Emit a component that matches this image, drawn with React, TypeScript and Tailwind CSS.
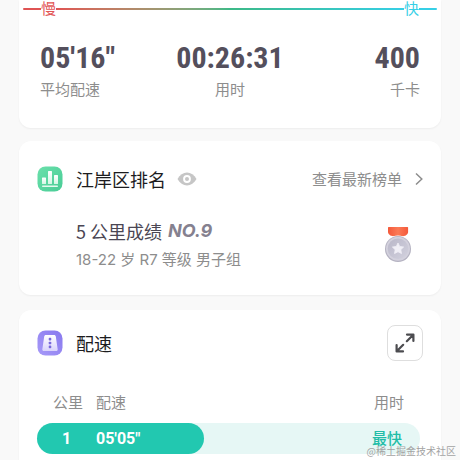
import React from 'react';

interface Split {
  km: number;
  pace: string;
  note: string;
  ratio: number;
}

const stats = [
  { value: '05\'16"', label: '平均配速', align: 'text-left' },
  { value: '00:26:31', label: '用时', align: 'text-center' },
  { value: '400', label: '千卡', align: 'text-right' },
];

const splits: Split[] = [{ km: 1, pace: '05\'05"', note: '最快', ratio: 0.436 }];

const RankIcon = () => (
  <svg viewBox="0 0 26 26" className="size-[26px] shrink-0" aria-hidden="true">
    <defs>
      <linearGradient id="rank-bg" x1="0" y1="0" x2="1" y2="1">
        <stop offset="0" stopColor="#6be0ab" />
        <stop offset="1" stopColor="#48cc96" />
      </linearGradient>
      <linearGradient id="rank-bar" x1="0" y1="0" x2="0" y2="1">
        <stop offset="0" stopColor="#ffffff" />
        <stop offset="1" stopColor="#d3f6e5" />
      </linearGradient>
    </defs>
    <rect x="0.5" y="0.5" width="25" height="25" rx="8" fill="url(#rank-bg)" />
    <rect x="5" y="11.5" width="4" height="6.5" rx="0.6" fill="url(#rank-bar)" />
    <rect x="11" y="5" width="4" height="13" rx="0.6" fill="url(#rank-bar)" />
    <rect x="17" y="9" width="4" height="9" rx="0.6" fill="url(#rank-bar)" />
    <rect x="5" y="19.5" width="16" height="1.4" rx="0.7" fill="#e5faf0" />
  </svg>
);

const RoadIcon = () => (
  <svg viewBox="0 0 26 26" className="size-[26px] shrink-0" aria-hidden="true">
    <defs>
      <linearGradient id="road-bg" x1="1" y1="0" x2="0" y2="1">
        <stop offset="0" stopColor="#8878ee" />
        <stop offset="1" stopColor="#a79af8" />
      </linearGradient>
      <linearGradient id="road-lane" x1="0" y1="0" x2="0" y2="1">
        <stop offset="0" stopColor="#ffffff" />
        <stop offset="1" stopColor="#d9d3fc" />
      </linearGradient>
    </defs>
    <rect x="0.5" y="0.5" width="25" height="25" rx="8" fill="url(#road-bg)" />
    <path d="M8.9 5h8.2c.9 0 1.6.6 1.7 1.5l1.9 13c.1.9-.5 1.5-1.4 1.5H6.7c-.9 0-1.5-.6-1.4-1.5l1.9-13C7.3 5.6 8 5 8.9 5z" fill="url(#road-lane)" />
    <g fill="#7868dc">
      <rect x="11.7" y="7.8" width="2.6" height="2.6" rx="0.9" />
      <rect x="11.7" y="11.7" width="2.6" height="2.6" rx="0.9" />
      <rect x="11.7" y="15.6" width="2.6" height="2.6" rx="0.9" />
    </g>
  </svg>
);

const EyeIcon = () => (
  <svg viewBox="0 0 20 14" className="h-3.5 w-5" aria-hidden="true">
    <path d="M.5 7C2.8 2.8 6.2.6 10 .6S17.2 2.8 19.5 7c-2.3 4.2-5.7 6.4-9.5 6.4S2.8 11.2.5 7z" fill="#c6c6c6" />
    <circle cx="10" cy="7" r="3.9" fill="#fff" />
    <circle cx="10" cy="7" r="2" fill="#c6c6c6" />
  </svg>
);

const MedalIcon = () => (
  <svg viewBox="0 0 28 36" className="h-9 w-7" aria-hidden="true">
    <defs>
      <linearGradient id="medal-face" x1="0" y1="0" x2="1" y2="1">
        <stop offset="0" stopColor="#b9b7c8" />
        <stop offset="1" stopColor="#d2d1de" />
      </linearGradient>
      <linearGradient id="medal-ribbon" x1="0" y1="0" x2="1" y2="0">
        <stop offset="0" stopColor="#f4593a" />
        <stop offset="0.5" stopColor="#fb7a56" />
        <stop offset="1" stopColor="#f4593a" />
      </linearGradient>
    </defs>
    <path d="M4.5 1h19c.4 0 .6.3.6.7V6c0 2-2.5 4.2-5 4.2H9c-2.5 0-5-2.2-5-4.2V1.7c0-.4.1-.7.5-.7z" fill="url(#medal-ribbon)" />
    <circle cx="14" cy="23" r="13.5" fill="#fff" />
    <circle cx="14" cy="23" r="13" fill="#b4b2c1" />
    <circle cx="14" cy="22.7" r="12" fill="#d3d1dd" />
    <circle cx="14" cy="22.7" r="10.3" fill="url(#medal-face)" />
    <path d="M14 17l1.7 3.5 3.9.5-2.8 2.7.7 3.9-3.5-1.9-3.5 1.9.7-3.9-2.8-2.7 3.9-.5z" fill="#f0eff6" stroke="#f0eff6" strokeWidth="0.8" strokeLinejoin="round" />
  </svg>
);

const ExpandIcon = () => (
  <svg viewBox="0 0 20 20" className="size-5" fill="none" stroke="#4c4c50" strokeWidth="2.2" strokeLinecap="round" strokeLinejoin="round" aria-hidden="true">
    <path d="M12 1.6h6.400V8M18 2l-6.200 6.200M8 18.400H1.600V12M2 18l6.200-6.200" />
  </svg>
);

export default function App() {
  return (
    <main className="relative flex min-h-screen flex-col bg-[#f9f9f9] px-[19px] font-['Noto_Sans_CJK_SC',sans-serif] text-[15px] leading-5 text-[#8d8d8d]">
      <section className="rounded-b-xl bg-white px-1 pb-[29px] shadow-xs shadow-black/5">
        <div className="flex h-[17px] items-center font-['Liberation_Sans','Noto_Sans_CJK_SC',sans-serif] leading-[17px]">
          <span className="h-0.5 w-[18px] rounded-l-full bg-[#df5353]" />
          <span className="text-[#e25555]">慢</span>
          <span className="h-0.5 flex-1 bg-linear-to-r from-[#df5353] via-[#3cb987] to-[#36cfe6]" />
          <span className="text-[#36cfe6]">快</span>
          <span className="h-0.5 w-[18px] rounded-r-full bg-[#36cfe6]" />
        </div>
        <dl className="mt-[25px] grid grid-cols-3 px-[17px]">
          {stats.map((s) => (
            <div key={s.label} className={`flex flex-col-reverse gap-[5px] ${s.align}`}>
              <dt>{s.label}</dt>
              <dd className="font-['Roboto_Condensed',Roboto,sans-serif] text-3xl leading-8 font-bold whitespace-nowrap text-[#544f5c]">
                {s.value}
              </dd>
            </div>
          ))}
        </dl>
      </section>

      <section className="mt-[13px] rounded-xl bg-white px-[18px] py-6 shadow-xs shadow-black/5">
        <div className="flex items-center">
          <RankIcon />
          <h2 className="ml-[13px] text-lg leading-7 text-[#1c1c1e]">江岸区排名</h2>
          <button type="button" aria-label="显示排名" className="ml-[11px]">
            <EyeIcon />
          </button>
          <a href="#ranking" className="ml-auto flex items-center gap-[13px]">
            查看最新榜单
            <svg viewBox="0 0 8 14" className="h-3.5 w-2" fill="none" stroke="currentColor" strokeWidth="1.5" aria-hidden="true">
              <path d="M1 1.5L6.8 7 1 12.5" />
            </svg>
          </a>
        </div>
        <div className="mt-6 flex items-center justify-between pr-[11px] pl-[39px]">
          <div>
            <p className="flex items-center gap-1.5 text-lg leading-7 text-[#4a4653]">
              5 公里成绩
              <em className="font-[Inter,sans-serif] font-bold text-[#85818f]">NO.9</em>
            </p>
            <p className="mt-1 font-[Inter,'Noto_Sans_CJK_SC',sans-serif] leading-[22px]">18-22 岁 R7 等级 男子组</p>
          </div>
          <MedalIcon />
        </div>
      </section>

      <section className="mt-[15px] grow rounded-t-xl bg-white px-[18px] pt-[15px] pb-1.5 shadow-xs shadow-black/5">
        <div className="flex items-center">
          <RoadIcon />
          <h2 className="ml-[13px] text-lg leading-7 text-[#1c1c1e]">配速</h2>
          <button
            type="button"
            aria-label="展开"
            className="ml-auto flex size-9 items-center justify-center rounded-lg border border-[#dedede]"
          >
            <ExpandIcon />
          </button>
        </div>
        <div className="mt-[31px] pr-[3px]">
          <table className="w-full">
            <thead>
              <tr>
                <th className="w-[59px] pb-[11px] pl-4 text-left font-normal">公里</th>
                <th className="pb-[11px] text-left font-normal">配速</th>
                <th className="pr-4 pb-[11px] text-right font-normal">用时</th>
              </tr>
            </thead>
            <tbody>
              {splits.map((s) => (
                <tr key={s.km} className="relative h-[31px] font-[Roboto,sans-serif] text-base font-bold text-white">
                  <td className="rounded-l-full bg-[#e6f7f5] text-center">
                    <span
                      className="absolute inset-y-0 left-0 rounded-full bg-[#22c8b0]"
                      style={{ width: `${s.ratio * 100}%` }}
                    />
                    <span className="relative">{s.km}</span>
                  </td>
                  <td className="bg-[#e6f7f5]">
                    <span className="relative">{s.pace}</span>
                  </td>
                  <td className="rounded-r-full bg-[#e6f7f5] pr-[18px] text-right font-['Noto_Sans_CJK_SC',sans-serif] text-[15px] font-medium text-[#22bda7]">
                    {s.note}
                  </td>
                </tr>
              ))}
            </tbody>
          </table>
        </div>
      </section>

      <p className="absolute right-1 bottom-0 text-[10px] leading-[18px] text-[#a3a3a3]">@稀土掘金技术社区</p>
    </main>
  );
}
